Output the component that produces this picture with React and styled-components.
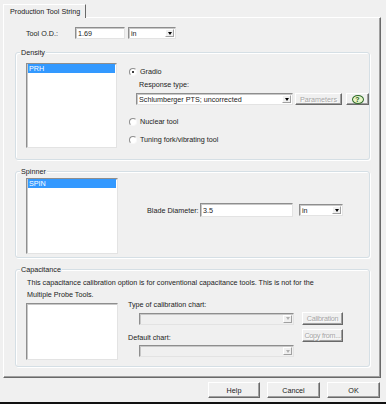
import React from 'react';
import styled, { createGlobalStyle, css } from 'styled-components';

const GlobalStyle = createGlobalStyle`
  html, body { margin: 0; padding: 0; background: #f0f0f0; }
  body {
    font-family: "Liberation Sans", Arial, sans-serif;
    font-size: 7.2px;
    color: #222;
  }
`;

const sunken = css`
  box-sizing: border-box;
  border: 1px solid;
  border-color: #8e8e8e #e3e3e3 #e3e3e3 #8e8e8e;
  box-shadow: inset 1px 1px 0 #c8c8c8;
`;

const raised = css`
  box-sizing: border-box;
  border: 1px solid;
  border-color: #fff #696969 #696969 #fff;
  box-shadow: inset -1px -1px 0 #a0a0a0;
  background: #f0f0f0;
`;

const Window = styled.div`
  width: 386px;
  height: 404px;
  box-sizing: border-box;
  display: flex;
  flex-direction: column;
  border-bottom: 2px solid #111;
`;

const TabStrip = styled.div`
  height: 17px;
  display: flex;
  align-items: flex-end;
  padding-left: 3px;
`;

const Tab = styled.div`
  height: 14px;
  box-sizing: border-box;
  padding: 0 5px 0 6px;
  display: flex;
  align-items: center;
  border-top: 1px solid #fff;
  border-left: 1px solid #fff;
  border-right: 1px solid #696969;
  margin-bottom: -1px;
  background: #f0f0f0;
  position: relative;
  z-index: 1;
`;

const Panel = styled.div`
  margin-left: 3px;
  width: 378px;
  height: 361px;
  box-sizing: border-box;
  border-top: 1px solid #fff;
  border-left: 1px solid #fff;
  border-right: 1px solid #696969;
  border-bottom: 1px solid #696969;
  box-shadow: inset -1px -1px 0 #a0a0a0;
  padding: 9px 0 0 11px;
  display: flex;
  flex-direction: column;
`;

const Row = styled.div`
  display: flex;
  align-items: center;
  height: ${p => p.$h || 12}px;
  margin-top: ${p => p.$mt || 0}px;
  margin-left: ${p => p.$ml || 0}px;
`;

const Label = styled.span`
  display: inline-block;
  width: ${p => (p.$w ? `${p.$w}px` : 'auto')};
  white-space: nowrap;
`;

const TextBox = styled.div`
  ${sunken};
  background: #fff;
  width: ${p => p.$w}px;
  height: ${p => p.$h || 12}px;
  padding-left: 2px;
  display: flex;
  align-items: center;
`;

const Combo = styled.div`
  ${sunken};
  background: ${p => (p.$disabled ? '#f0f0f0' : '#fff')};
  width: ${p => p.$w}px;
  height: ${p => p.$h || 12}px;
  display: flex;
  align-items: center;
  justify-content: space-between;
  padding: 0 1px 0 2px;
  white-space: nowrap;
`;

const DropButton = styled.span`
  box-sizing: border-box;
  width: 9px;
  height: 8px;
  border: 1px solid;
  border-color: #fff #a0a0a0 #a0a0a0 #fff;
  background: #f0f0f0;
  display: flex;
  align-items: center;
  justify-content: center;

  &::after {
    content: '';
    border-left: 2.5px solid transparent;
    border-right: 2.5px solid transparent;
    border-top: 3px solid ${p => (p.$disabled ? '#b0b0b0' : '#000')};
  }
`;

const Group = styled.div`
  position: relative;
  width: 355px;
  height: ${p => p.$h}px;
  margin-top: ${p => p.$mt}px;
  box-sizing: border-box;
  border: 1px solid #d5dfe5;
  border-radius: 3px;
  box-shadow: 1px 1px 0 #fff, inset 1px 1px 0 #fff;
  padding: ${p => p.$pt}px 0 0 10px;
  display: flex;
  flex-direction: column;
`;

const Caption = styled.span`
  position: absolute;
  top: -5px;
  left: 4px;
  padding: 0 1px;
  background: #f0f0f0;
  line-height: 9px;
`;

const Body = styled.div`
  display: flex;
  align-items: flex-start;
`;

const ListBox = styled.div`
  ${sunken};
  background: #fff;
  width: 92px;
  height: ${p => p.$h}px;
  margin-top: ${p => p.$mt || 0}px;
  padding: 0 1px;
`;

const ListItem = styled.div`
  background: #3399ff;
  color: #fff;
  height: 9px;
  line-height: 9px;
  padding-left: 1px;
`;

const Column = styled.div`
  display: flex;
  flex-direction: column;
  margin-left: ${p => p.$ml || 12}px;
  margin-top: ${p => p.$mt || 0}px;
`;

const RadioRow = styled.label`
  display: flex;
  align-items: center;
  gap: 3px;
  height: 9px;
  margin-top: ${p => p.$mt || 0}px;
`;

const RadioDot = styled.span`
  width: 8px;
  height: 8px;
  box-sizing: border-box;
  border-radius: 50%;
  border: 1px solid;
  border-color: #8e8e8e #f8f8f8 #f8f8f8 #8e8e8e;
  background: #fff;
  display: flex;
  align-items: center;
  justify-content: center;

  &::after {
    content: '';
    width: 2px;
    height: 2px;
    border-radius: 50%;
    background: ${p => (p.$checked ? '#000' : 'transparent')};
  }
`;

const Button = styled.div`
  ${raised};
  width: ${p => p.$w}px;
  height: ${p => p.$h || 13}px;
  display: flex;
  align-items: center;
  justify-content: center;
  white-space: nowrap;
  overflow: hidden;
  letter-spacing: ${p => (p.$tight ? '-0.25px' : 'normal')};
  color: ${p => (p.$disabled ? '#a6a6a6' : '#222')};
  text-shadow: ${p => (p.$disabled ? '1px 1px 0 #fff' : 'none')};
  margin-left: ${p => p.$ml || 0}px;
  grid-column: ${p => p.$col || 'auto'};
  grid-row: ${p => p.$row || 'auto'};
`;

const HelpGlyph = styled.span`
  width: 12px;
  height: 9px;
  box-sizing: border-box;
  border-radius: 50%;
  border: 1px solid #2f6b2a;
  background: #e6f5c8;
  color: #1f5a1a;
  font-weight: bold;
  font-size: 7px;
  line-height: 7px;
  text-align: center;
`;

const Note = styled.p`
  margin: 0 0 0 1px;
  line-height: 11.5px;
  white-space: nowrap;
`;

const CapGrid = styled.div`
  display: grid;
  grid-template-columns: 166px 41px;
  grid-template-rows: 9px 13px 14px 12px;
  row-gap: 3px;
  column-gap: 8px;
  align-items: center;
  margin-left: 10px;
`;

const GridLabel = styled.span`
  grid-column: 1;
  white-space: nowrap;
  align-self: ${p => p.$align || 'center'};
`;

const Indent = styled.div`
  grid-column: 1;
  padding-left: 11px;
`;

const Footer = styled.div`
  flex: 1;
  display: flex;
  justify-content: flex-end;
  align-items: flex-start;
  gap: 7px;
  padding: 4px 6px 0 0;
`;

const Select = ({ value, w, h, disabled }) => (
  <Combo $w={w} $h={h} $disabled={disabled}>
    <span>{value}</span>
    <DropButton $disabled={disabled} />
  </Combo>
);

const Radio = ({ checked, children, mt }) => (
  <RadioRow $mt={mt}>
    <RadioDot $checked={checked} />
    <span>{children}</span>
  </RadioRow>
);

export default function App() {
  return (
    <Window>
      <GlobalStyle />
      <TabStrip>
        <Tab>Production Tool String</Tab>
      </TabStrip>
      <Panel>
        <Row $ml={11} $h={12}>
          <Label $w={49}>Tool O.D.:</Label>
          <TextBox $w={50}>1.69</TextBox>
          <Row $ml={3}>
            <Select value="in" w={48} />
          </Row>
        </Row>

        <Group $h={108} $mt={13} $pt={10}>
          <Caption>Density</Caption>
          <Body>
            <ListBox $h={85}>
              <ListItem>PRH</ListItem>
            </ListBox>
            <Column $mt={4}>
              <Radio checked>Gradio</Radio>
              <Row $h={9} $mt={4} $ml={10}>Response type:</Row>
              <Row $mt={4} $ml={7}>
                <Select value="Schlumberger PTS; uncorrected" w={157} />
                <Button $w={47} $h={12} $ml={2} $disabled>Parameters</Button>
                <Button $w={23} $h={12} $ml={4}><HelpGlyph>?</HelpGlyph></Button>
              </Row>
              <Radio mt={12}>Nuclear tool</Radio>
              <Radio mt={9}>Tuning fork/vibrating tool</Radio>
            </Column>
          </Body>
        </Group>

        <Group $h={87} $mt={11} $pt={6}>
          <Caption>Spinner</Caption>
          <Body>
            <ListBox $h={76}>
              <ListItem>SPIN</ListItem>
            </ListBox>
            <Row $h={14} $mt={25} $ml={29}>
              <Label $w={53}>Blade Diameter:</Label>
              <TextBox $w={93} $h={14}>3.5</TextBox>
              <Row $ml={6}>
                <Select value="in" w={44} />
              </Row>
            </Row>
          </Body>
        </Group>

        <Group $h={98} $mt={11} $pt={7}>
          <Caption>Capacitance</Caption>
          <Note>
            This capacitance calibration option is for conventional capacitance tools. This is not for the
            <br />
            Multiple Probe Tools.
          </Note>
          <Body>
            <ListBox $h={57} $mt={3} />
            <CapGrid>
              <GridLabel>Type of calibration chart:</GridLabel>
              <Indent><Select w={155} disabled /></Indent>
              <GridLabel $align="end">Default chart:</GridLabel>
              <Indent><Select w={155} disabled /></Indent>
              <Button $w={41} $h={13} $col={2} $row={2} $disabled $tight>Calibration</Button>
              <Button $w={41} $h={13} $col={2} $row={3} $disabled $tight>Copy from...</Button>
            </CapGrid>
          </Body>
        </Group>
      </Panel>
      <Footer>
        <Button $w={52} $h={16}>Help</Button>
        <Button $w={53} $h={16}>Cancel</Button>
        <Button $w={53} $h={16}>OK</Button>
      </Footer>
    </Window>
  );
}
